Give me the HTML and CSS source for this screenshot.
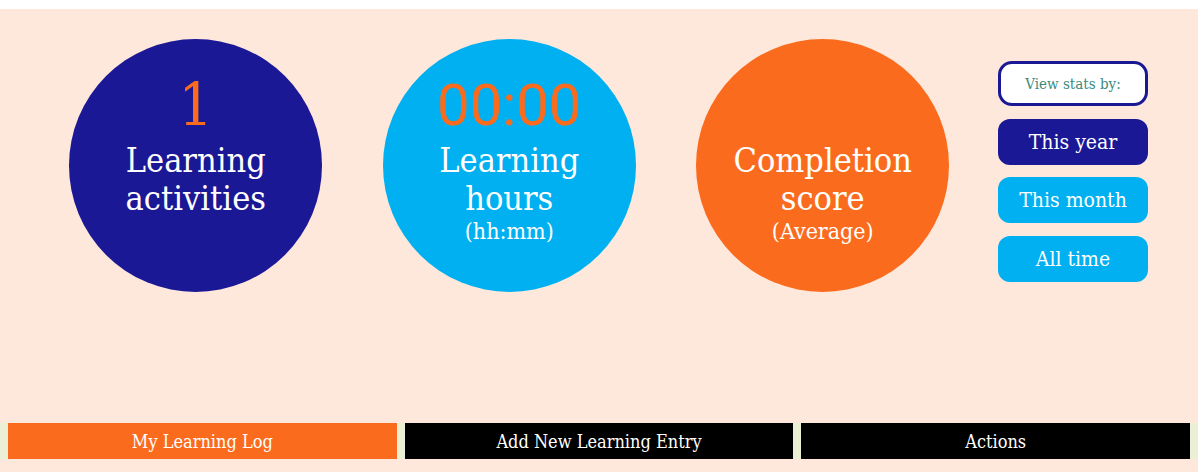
FILE: index.html
```html
<!DOCTYPE html>
<html lang="en">
<head>
<meta charset="utf-8">
<title>My Learning</title>
<link rel="stylesheet" href="styles.css">
</head>
<body>
<div class="page">
  <div class="stats">
    <div class="stat-col">
      <div class="circle navy">
        <div class="num">1</div>
        <div class="label">Learning<br>activities</div>
      </div>
    </div>
    <div class="stat-col">
      <div class="circle sky">
        <div class="num time">00:00</div>
        <div class="label">Learning<br>hours</div>
        <div class="sub">(hh:mm)</div>
      </div>
    </div>
    <div class="stat-col">
      <div class="circle orange">
        <div class="num"></div>
        <div class="label">Completion<br>score</div>
        <div class="sub">(Average)</div>
      </div>
    </div>
    <div class="side">
      <div class="view-by">View stats by:</div>
      <div class="btn active">This year</div>
      <div class="btn">This month</div>
      <div class="btn">All time</div>
    </div>
  </div>
  <div class="tabs">
    <div class="tab current">My Learning Log</div>
    <div class="tab">Add New Learning Entry</div>
    <div class="tab">Actions</div>
  </div>
</div>
</body>
</html>
```

FILE: styles.css
```css
html, body {
  margin: 0;
  padding: 0;
  background: #ffffff;
}
body {
  font-family: "Roboto Slab", "DejaVu Serif Condensed", "DejaVu Serif", serif;
  color: #ffffff;
}
.page {
  margin-top: 9px;
  height: 463px;
  background: #fee8dc;
  display: flex;
  flex-direction: column;
}
.stats {
  display: flex;
  padding: 30px 0 0 39px;
}
.stat-col {
  width: 313.5px;
  display: flex;
  justify-content: center;
}
.circle {
  width: 253px;
  height: 253px;
  border-radius: 50%;
  display: flex;
  flex-direction: column;
  align-items: center;
  box-sizing: border-box;
  padding-top: 36px;
  text-align: center;
}
.navy { background: #1b1896; }
.sky { background: #00b0f0; }
.orange { background: #fb6b1d; }
.num {
  height: 60px;
  font-size: 60px;
  line-height: 60px;
  color: #fb6b1d;
}
.num.time {
  font-family: "Roboto", "DejaVu Sans", sans-serif;
  font-size: 58px;
}
.label {
  margin-top: 6px;
  font-size: 34px;
  line-height: 38px;
}
.sub {
  font-size: 23px;
  line-height: 28px;
  font-weight: 300;
}
.side {
  margin-left: 18.5px;
  margin-top: 22px;
  width: 150px;
  display: flex;
  flex-direction: column;
  gap: 12.5px;
}
.view-by {
  height: 45px;
  box-sizing: border-box;
  border: 3px solid #1b1896;
  border-radius: 14px;
  background: #ffffff;
  color: #3d8a7c;
  font-size: 15px;
  font-weight: 300;
  display: flex;
  align-items: center;
  justify-content: center;
}
.btn {
  height: 46px;
  border-radius: 12px;
  background: #00b0f0;
  font-size: 21px;
  display: flex;
  align-items: center;
  justify-content: center;
}
.btn.active {
  background: #1b1896;
}
.tabs {
  margin-top: auto;
  margin-bottom: 13px;
  display: flex;
  gap: 8px;
  padding: 0 8px;
  background: #ebefd4;
}
.tab {
  flex: 1;
  height: 36px;
  background: #000000;
  font-size: 18px;
  display: flex;
  align-items: center;
  justify-content: center;
}
.tab.current {
  background: #fb6b1d;
}
```
